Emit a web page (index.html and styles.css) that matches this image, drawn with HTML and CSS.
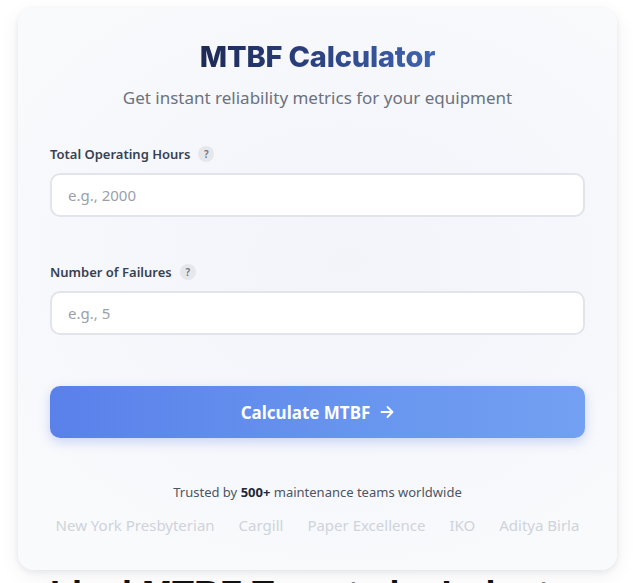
FILE: index.html
```html
<!DOCTYPE html>
<html>
<head>
<meta charset="utf-8">
<link rel="stylesheet" href="styles.css">
</head>
<body>
<div class="page">
  <div class="card">
    <h1 class="title">MTBF Calculator</h1>
    <p class="subtitle">Get instant reliability metrics for your equipment</p>
    <div class="form">
      <div class="field">
        <label class="label">Total Operating Hours <span class="help">?</span></label>
        <input class="input" type="text" placeholder="e.g., 2000">
      </div>
      <div class="field">
        <label class="label">Number of Failures <span class="help">?</span></label>
        <input class="input" type="text" placeholder="e.g., 5">
      </div>
      <button class="btn">Calculate MTBF <svg class="arrow" width="14" height="14" viewBox="0 0 14 14"><path d="M1.5 7h11M7.5 2l5 5-5 5" fill="none" stroke="#fff" stroke-width="1.8" stroke-linecap="round" stroke-linejoin="round"/></svg></button>
    </div>
    <p class="trusted">Trusted by <b>500+</b> maintenance teams worldwide</p>
    <div class="logos">
      <span>New York Presbyterian</span>
      <span>Cargill</span>
      <span>Paper Excellence</span>
      <span>IKO</span>
      <span>Aditya Birla</span>
    </div>
  </div>
  <h2 class="next">Ideal MTBF Targets by Industry</h2>
</div>
</body>
</html>
```
FILE: styles.css
```css
* { box-sizing: border-box; }
html, body { margin: 0; padding: 0; background: #ffffff; overflow: hidden; }
body { font-family: "Noto Sans", "Open Sans", sans-serif; }
.page { padding: 8px 17px 0 18px; }
.card {
  width: 599px;
  border-radius: 16px;
  background: radial-gradient(ellipse 70% 60% at 55% 45%, #f2f4fa 0%, #f6f7fb 55%, #f9fafc 100%);
  box-shadow: 0 2px 6px rgba(20, 30, 60, 0.08), 0 6px 22px rgba(20, 30, 60, 0.06);
  padding: 31px 32px 35px;
}
.title {
  margin: 0 auto;
  width: fit-content;
  text-align: center;
  font-family: "Inter", sans-serif;
  font-weight: 800;
  font-size: 29px;
  line-height: 36px;
  letter-spacing: -0.2px;
  background: linear-gradient(90deg, #1d2a54 0%, #2a3f7c 45%, #4164b1 100%);
  -webkit-background-clip: text;
  background-clip: text;
  color: transparent;
}
.subtitle {
  margin: 11px 0 0;
  text-align: center;
  color: #6b7280;
  font-size: 17px;
  line-height: 24px;
}
.form { margin-top: 34px; display: flex; flex-direction: column; }
.field { display: flex; flex-direction: column; }
.field + .field { margin-top: 45px; }
.label {
  display: flex;
  align-items: center;
  gap: 8px;
  font-size: 13px;
  font-weight: 600;
  color: #374151;
  line-height: 20px;
  margin-bottom: 9px;
}
.help {
  display: inline-flex;
  align-items: center;
  justify-content: center;
  width: 16px;
  height: 16px;
  border-radius: 50%;
  background: #e5e7eb;
  color: #6b7280;
  font-size: 10px;
  font-weight: 600;
}
.input {
  height: 44px;
  width: 100%;
  border: 2px solid #e1e4ea;
  border-radius: 10px;
  background: #ffffff;
  padding: 0 16px;
  font-family: inherit;
  font-size: 15px;
  color: #111827;
  outline: none;
}
.input::placeholder { color: #9aa1ab; }
.btn {
  margin-top: 51px;
  height: 52px;
  width: 100%;
  border: none;
  border-radius: 10px;
  background: linear-gradient(90deg, #5a80ea 0%, #6794ee 55%, #73a0f2 100%);
  box-shadow: 0 4px 12px rgba(90, 128, 234, 0.3);
  color: #ffffff;
  font-family: inherit;
  font-size: 17px;
  font-weight: 700;
  display: flex;
  align-items: center;
  justify-content: center;
  gap: 10px;
}
.arrow { display: block; }
.trusted {
  margin: 45px 0 0;
  text-align: center;
  font-size: 13px;
  line-height: 18px;
  color: #4b5563;
}
.trusted b { color: #1f2937; font-weight: 700; }
.logos {
  margin-top: 14px;
  display: flex;
  justify-content: center;
  gap: 24px;
  font-size: 15px;
  line-height: 20px;
  color: #cfd3da;
}
.next {
  margin: 5px 0 0;
  padding-left: 32px;
  font-family: "Liberation Sans", Arial, sans-serif;
  font-weight: 700;
  font-size: 36px;
  line-height: 40px;
  color: #111111;
}
```
